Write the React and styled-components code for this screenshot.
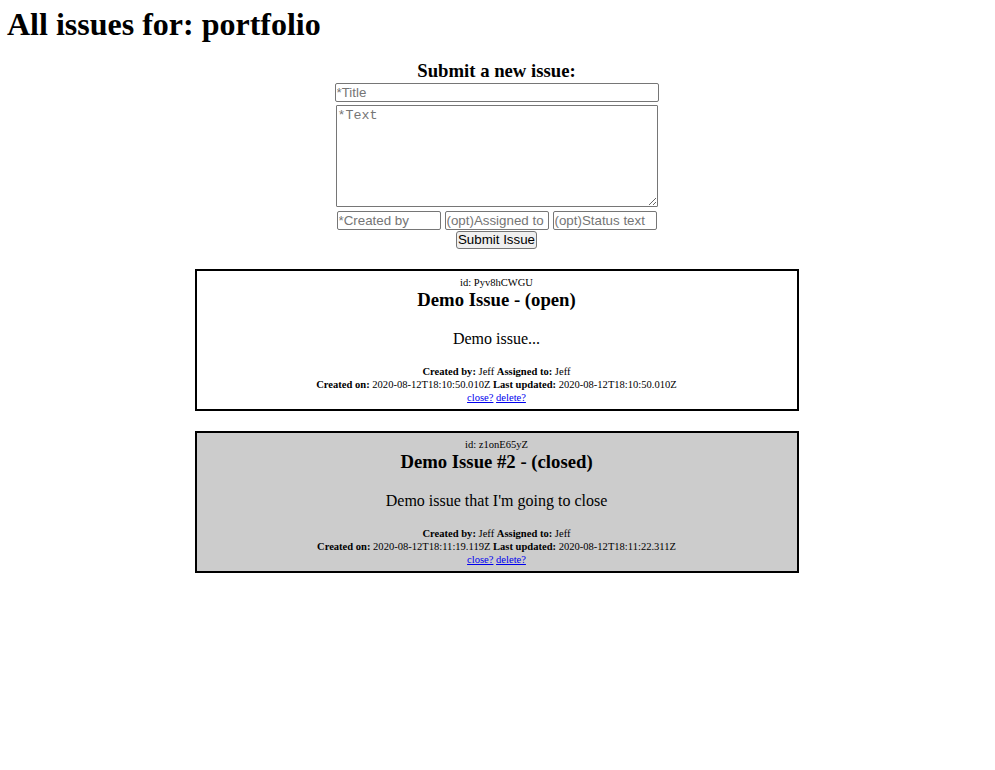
import React from 'react';
import styled, { createGlobalStyle } from 'styled-components';

const GlobalStyle = createGlobalStyle`
  body {
    margin: 0;
    background: #fff;
    color: #000;
    font-family: "Liberation Serif", "Times New Roman", serif;
  }
`;

const issues = [
  {
    _id: 'Pyv8hCWGU',
    issue_title: 'Demo Issue',
    issue_text: 'Demo issue...',
    created_by: 'Jeff',
    assigned_to: 'Jeff',
    created_on: '2020-08-12T18:10:50.010Z',
    updated_on: '2020-08-12T18:10:50.010Z',
    open: true,
  },
  {
    _id: 'z1onE65yZ',
    issue_title: 'Demo Issue #2',
    issue_text: "Demo issue that I'm going to close",
    created_by: 'Jeff',
    assigned_to: 'Jeff',
    created_on: '2020-08-12T18:11:19.119Z',
    updated_on: '2020-08-12T18:11:22.311Z',
    open: false,
  },
];

export default () => {
  return (
    <Page>
      <GlobalStyle />
      <ProjectTitle>All issues for: portfolio</ProjectTitle>
      <SubmitSection>
        <FormTitle>Submit a new issue:</FormTitle>
        <Form onSubmit={(e) => e.preventDefault()}>
          <TitleInput type='text' placeholder='*Title' />
          <TextArea placeholder='*Text' />
          <Row>
            <SmallInput type='text' placeholder='*Created by' />
            <SmallInput type='text' placeholder='(opt)Assigned to' />
            <SmallInput type='text' placeholder='(opt)Status text' />
          </Row>
          <SubmitButton type='submit'>Submit Issue</SubmitButton>
        </Form>
      </SubmitSection>
      <IssueList>
        {issues.map((ele) => {
          const status = ele.open ? 'open' : 'closed';
          return (
            <Issue key={ele._id} $closed={!ele.open}>
              <Small>id: {ele._id}</Small>
              <IssueTitle>
                {ele.issue_title} - ({status})
              </IssueTitle>
              <IssueText>{ele.issue_text}</IssueText>
              <Meta>
                <Small>
                  <b>Created by:</b> {ele.created_by} <b>Assigned to:</b>{' '}
                  {ele.assigned_to}
                </Small>
                <Small>
                  <b>Created on:</b> {ele.created_on} <b>Last updated:</b>{' '}
                  {ele.updated_on}
                </Small>
                <Small>
                  <Link href='#'>close?</Link> <Link href='#'>delete?</Link>
                </Small>
              </Meta>
            </Issue>
          );
        })}
      </IssueList>
    </Page>
  );
};

const Page = styled.div`
  padding: 6px 9px 0 7px;
  text-align: center;
`;

const ProjectTitle = styled.h1`
  margin: 0;
  font-size: 32px;
  line-height: 37px;
  font-weight: bold;
  text-align: left;
`;

const SubmitSection = styled.div`
  margin: 17px 0 20px;
  display: flex;
  flex-direction: column;
  align-items: center;
`;

const FormTitle = styled.h3`
  margin: 0 0 1px;
  font-size: 18.72px;
  line-height: 22px;
  font-weight: bold;
`;

const Form = styled.form`
  display: flex;
  flex-direction: column;
  align-items: center;
`;

const fieldBase = `
  box-sizing: content-box;
  font-family: "Liberation Sans", Arial, sans-serif;
  font-size: 13.33px;
  color: #000;
  background: #fff;
  border: 1px solid #767676;
  border-radius: 2px;
  outline: none;
  &::placeholder {
    color: #757575;
  }
`;

const TitleInput = styled.input`
  ${fieldBase}
  width: 320px;
  height: 15px;
  line-height: 15px;
  padding: 1px;
  margin: 0 0 3px;
`;

const TextArea = styled.textarea`
  ${fieldBase}
  box-sizing: border-box;
  font-family: "Liberation Mono", "Courier New", monospace;
  width: 322px;
  height: 102px;
  padding: 2px 1px;
  margin: 0 0 4px;
  border-radius: 1px;
  line-height: 16px;
`;

const Row = styled.div`
  display: flex;
  gap: 4px;
  margin-bottom: 1px;
`;

const SmallInput = styled.input`
  ${fieldBase}
  width: 100px;
  height: 15px;
  line-height: 15px;
  padding: 1px;
  margin: 0;
`;

const SubmitButton = styled.button`
  box-sizing: content-box;
  font-family: "Liberation Sans", Arial, sans-serif;
  font-size: 13.33px;
  line-height: 16px;
  height: 16px;
  color: #000;
  background: #efefef;
  border: 1px solid #767676;
  border-radius: 3px;
  padding: 0 1px;
  margin: 0;
`;

const IssueList = styled.div`
  display: flex;
  flex-direction: column;
  align-items: center;
`;

const Issue = styled.div`
  width: 600px;
  border: 2px solid #000;
  padding: 5px 0 5px;
  margin-bottom: 20px;
  background: ${(p) => (p.$closed ? '#ccc' : '#fff')};
  display: flex;
  flex-direction: column;
  align-items: center;
`;

const Small = styled.p`
  margin: 0;
  font-size: 10.56px;
  line-height: 13px;
`;

const IssueTitle = styled.h3`
  margin: 0;
  font-size: 18.72px;
  line-height: 22px;
  font-weight: bold;
`;

const IssueText = styled.p`
  margin: 19px 0 0;
  font-size: 16px;
  line-height: 18px;
`;

const Meta = styled.div`
  margin-top: 17px;
`;

const Link = styled.a`
  color: #0000ee;
  text-decoration: underline;
`;
